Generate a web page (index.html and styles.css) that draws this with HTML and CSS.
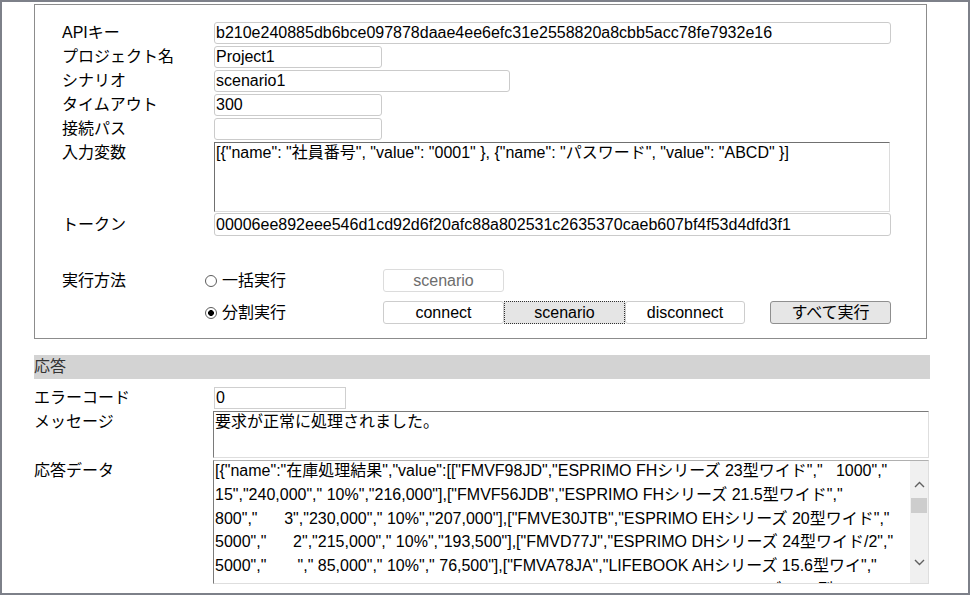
FILE: index.html
```html
<html>
<head>
    <title>API実行テスト</title>
    <link rel="stylesheet" href="styles.css">
</head>
<body>

<div class="window">

    <!-- リクエスト -->
    <div class="request">
        <div class="row"><span class="name">APIキー</span><input class="field long" type="text" value="b210e240885db6bce097878daae4ee6efc31e2558820a8cbb5acc78fe7932e16"></div>
        <div class="row"><span class="name">プロジェクト名</span><input class="field short" type="text" value="Project1"></div>
        <div class="row"><span class="name">シナリオ</span><input class="field mid" type="text" value="scenario1"></div>
        <div class="row"><span class="name">タイムアウト</span><input class="field short" type="text" value="300"></div>
        <div class="row"><span class="name">接続パス</span><input class="field short" type="text" value=""></div>
        <div class="row top"><span class="name">入力変数</span><textarea class="vars">[{"name": "社員番号", "value": "0001" }, {"name": "パスワード", "value": "ABCD" }]</textarea></div>
        <div class="row token"><span class="name">トークン</span><input class="field long tall" type="text" value="00006ee892eee546d1cd92d6f20afc88a802531c2635370caeb607bf4f53d4dfd3f1"></div>

        <div class="method">
            <div class="method-row">
                <span class="method-label">実行方法</span>
                <span class="option"><span class="radio"></span>一括実行</span>
                <button class="btn" type="button" disabled>scenario</button>
            </div>
            <div class="method-row">
                <span class="method-label"></span>
                <span class="option"><span class="radio checked"></span>分割実行</span>
                <button class="btn" type="button">connect</button>
                <button class="btn focused" type="button">scenario</button>
                <button class="btn narrow" type="button">disconnect</button>
                <button class="btn run-all" type="button">すべて実行</button>
            </div>
        </div>
    </div>

    <!-- 応答 -->
    <div class="section-head">応答</div>

    <div class="res-row first">
        <span class="res-name">エラーコード</span>
        <input class="code" type="text" value="0">
    </div>
    <div class="res-row">
        <span class="res-name">メッセージ</span>
        <div class="box message">要求が正常に処理されました。</div>
    </div>
    <div class="res-row">
        <span class="res-name">応答データ</span>
        <div class="box data">
            <div class="data-text">
<div class="line">[{"name":"在庫処理結果","value":[["FMVF98JD","ESPRIMO FHシリーズ 23型ワイド","   1000","</div>
<div class="line">15","240,000"," 10%","216,000"],["FMVF56JDB","ESPRIMO FHシリーズ 21.5型ワイド","</div>
<div class="line">800","      3","230,000"," 10%","207,000"],["FMVE30JTB","ESPRIMO EHシリーズ 20型ワイド","</div>
<div class="line">5000","      2","215,000"," 10%","193,500"],["FMVD77J","ESPRIMO DHシリーズ 24型ワイド/2","</div>
<div class="line">5000","       "," 85,000"," 10%"," 76,500"],["FMVA78JA","LIFEBOOK AHシリーズ 15.6型ワイ","</div>
<div class="line">3000","      ","148,000"," 15%","140,000"],["FMVA53JB","LIFEBOOK AHシリーズ 15.6型ワイド","</div>
            </div>
            <div class="scrollbar">
                <svg class="arrow up" width="11" height="7" viewBox="0 0 11 7"><polyline points="1,6 5.5,1.5 10,6" fill="none" stroke="#606060" stroke-width="1.4"/></svg>
                <div class="thumb"></div>
                <svg class="arrow down" width="11" height="7" viewBox="0 0 11 7"><polyline points="1,1 5.5,5.5 10,1" fill="none" stroke="#606060" stroke-width="1.4"/></svg>
            </div>
        </div>
    </div>

</div>

</body>
</html>
```

FILE: styles.css
```css
/* Osnovni stil stranice */
body {
    margin: 0;
    background-color: white;
    color: #000;
    font-family: 'Liberation Sans', 'Noto Sans CJK JP', sans-serif;
    font-size: 16px;
    line-height: 22px;
}

/* Okvir prozora */
.window {
    width: 970px;
    height: 595px;
    box-sizing: border-box;
    border: 2px solid #7d8089;
    padding: 2px 0 0 32px;
    overflow: hidden;
}

/* Blok zahteva */
.request {
    width: 893px;
    box-sizing: border-box;
    border: 1px solid #8c8c8c;
    padding: 17px 0 14px 27px;
}

.row {
    display: flex;
    align-items: center;
    height: 22px;
    margin-bottom: 2px;
}

.row.top {
    align-items: flex-start;
    height: 70px;
    margin-bottom: 1px;
}

.row.token {
    height: 23px;
}

.name {
    width: 152px;
    flex: none;
    line-height: 22px;
}

/* Polja za unos */
.field {
    height: 22px;
    box-sizing: border-box;
    border: 1px solid #cbcbcb;
    border-radius: 3px;
    padding: 0 1px;
    margin: 0;
    font-family: 'Liberation Sans', 'Noto Sans CJK JP', sans-serif;
    font-size: 16px;
    line-height: 20px;
    color: #000;
    background: white;
    outline: none;
}

.field.long { width: 677px; }
.field.mid { width: 296px; }
.field.short { width: 168px; }
.field.tall { height: 23px; }

.vars {
    width: 676px;
    height: 70px;
    box-sizing: border-box;
    margin: 0;
    padding: 0 1px;
    border: 1px solid #dcdcdc;
    border-top-color: #707070;
    border-left-color: #707070;
    font-family: 'Liberation Sans', 'Noto Sans CJK JP', sans-serif;
    font-size: 16px;
    line-height: 20px;
    resize: none;
    overflow: hidden;
    outline: none;
}

/* Način izvršavanja */
.method {
    margin-top: 33px;
}

.method-row {
    display: flex;
    align-items: center;
    height: 23px;
    margin-bottom: 9px;
}

.method-row:last-child {
    margin-bottom: 0;
}

.method-label {
    width: 143px;
    flex: none;
}

.option {
    width: 178px;
    flex: none;
    display: flex;
    align-items: center;
}

.radio {
    width: 12px;
    height: 12px;
    box-sizing: border-box;
    border: 1px solid #5c5c5c;
    border-radius: 50%;
    margin-right: 5px;
    background: white;
}

.radio.checked {
    background: radial-gradient(circle, #000 0 2.6px, #fff 3.2px);
}

/* Dugmad */
.btn {
    width: 121px;
    height: 23px;
    box-sizing: border-box;
    margin: 0;
    padding: 0;
    border: 1px solid #cdcdcd;
    border-radius: 3px;
    background: white;
    color: #000;
    font-family: 'Liberation Sans', 'Noto Sans CJK JP', sans-serif;
    font-size: 16px;
    line-height: 20px;
}

.btn:disabled {
    color: #6d6d6d;
    border-color: #dcdcdc;
}

.btn.narrow {
    width: 120px;
}

.btn.focused {
    background: #e5e5e5;
    border: 1px dotted #303030;
    border-radius: 0;
}

.btn.run-all {
    margin-left: 25px;
    background: #e6e6e6;
    border-color: #8f8f8f;
}

/* Odgovor */
.section-head {
    width: 896px;
    height: 24px;
    margin-top: 16px;
    background: #d3d3d3;
    color: #333;
    line-height: 24px;
}

.res-row {
    display: flex;
    align-items: flex-start;
    margin-top: 2px;
}

.res-row.first {
    margin-top: 8px;
    align-items: center;
}

.res-name {
    width: 179px;
    flex: none;
    line-height: 22px;
}

.code {
    width: 132px;
    height: 22px;
    box-sizing: border-box;
    margin: 0 0 0 1px;
    padding: 0 1px;
    border: 1px solid #cfcfcf;
    font-family: 'Liberation Sans', 'Noto Sans CJK JP', sans-serif;
    font-size: 16px;
    line-height: 20px;
    outline: none;
}

.box {
    width: 716px;
    box-sizing: border-box;
    border: 1px solid #dedede;
    border-top-color: #7a7a7a;
    border-left-color: #7a7a7a;
    padding: 0 1px;
    overflow: hidden;
}

.message {
    height: 47px;
    line-height: 20px;
}

.data {
    height: 124px;
    display: flex;
    padding-right: 0;
    border-top-color: #b0b0b0;
}

.data-text {
    flex: 1;
    overflow: hidden;
    margin-top: -2px;
}

.line {
    white-space: pre;
    line-height: 23.75px;
}

/* Traka za pomeranje */
.scrollbar {
    width: 18px;
    flex: none;
    background: #f0f0f0;
    position: relative;
}

.arrow {
    position: absolute;
    left: 4px;
}

.arrow.up { top: 20px; }
.arrow.down { top: 98px; }

.thumb {
    position: absolute;
    left: 1px;
    top: 37px;
    width: 16px;
    height: 15px;
    background: #cdcdcd;
}
```
